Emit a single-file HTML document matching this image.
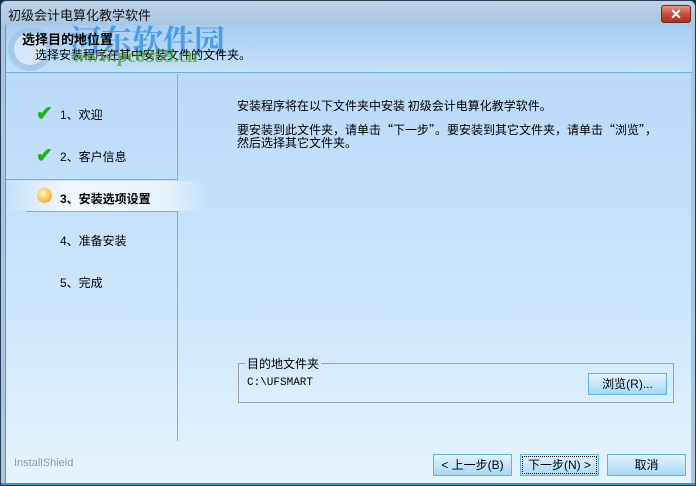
<!DOCTYPE html>
<html><head><meta charset="utf-8"><style>
*{margin:0;padding:0;box-sizing:border-box}
body{width:696px;height:486px;overflow:hidden;font-family:"Liberation Sans","Noto Sans CJK SC","WenQuanYi Zen Hei",sans-serif;font-size:12px;color:#000;background:#1b2a3a}
.win{position:absolute;left:0;top:0;width:696px;height:486px;border:1px solid #2b3c50;border-radius:6px 6px 0 0;background:linear-gradient(#bdd3e8,#a9c6e2 25px);overflow:hidden}
.title{position:absolute;left:7px;top:4px;font-size:13px;color:#111}
.close{position:absolute;left:660px;top:4px;width:30px;height:18px;border:1px solid #6b2a22;border-radius:3px;background:linear-gradient(#e2968a,#c5503e 50%,#b0301f);color:#fff;font-weight:bold;text-align:center;line-height:16px;font-size:14px}
.client{position:absolute;left:4px;top:24px;width:686px;height:459px;background:linear-gradient(#b6d7f8,#cde6fb 60%,#e6f4fd);border-left:1px solid #6a90b8}
.hdr{position:absolute;left:0;top:0;width:686px;height:48px;background:linear-gradient(#a9cdf2,#c4e0fa);border-bottom:1px solid #6fb1e8}
.h1{position:absolute;left:16px;top:4px;font-size:13px;font-weight:bold}
.h2{position:absolute;left:29px;top:21px;font-size:12px}
.wm{position:absolute;left:64px;top:-9px;font-size:31px;font-weight:bold;color:rgba(40,140,230,.75);font-family:"Noto Serif CJK SC",serif}
.wm2{position:absolute;left:66px;top:21px;font-size:19px;font-weight:bold;color:rgba(70,160,40,.7);font-family:"Liberation Serif",serif}
.logo{position:absolute;left:2px;top:2px;width:44px;height:44px;border-radius:50%;background:rgba(230,240,250,.6);border:6px solid rgba(120,170,220,.5)}
.vl{position:absolute;width:1px;background:#6fb1e8}
.hl{position:absolute;height:1px;background:#6fb1e8}
.step{position:absolute;left:54px;font-size:12px}
.chk{position:absolute;left:30px;color:#1db31d;font-size:20px;font-weight:bold}
.band{position:absolute;left:0;top:156px;width:200px;height:30px;background:linear-gradient(90deg,rgba(255,255,255,0),rgba(245,250,255,.95) 30%,rgba(255,255,255,.6) 80%,rgba(255,255,255,0))}
.ball{position:absolute;left:31px;top:163px;width:15px;height:15px;border-radius:50%;background:radial-gradient(circle at 40% 35%,#fff6c0,#f7c045 60%,#d88a10)}
.txt{position:absolute;left:231px;font-size:12px;line-height:13px;font-family:"Noto Sans CJK SC",sans-serif}
.grp{position:absolute;left:232px;top:338px;width:436px;height:40px;border:1px solid #a0a0a0}
.gl{position:absolute;left:6px;top:-9px;background:#d3e9fb;padding:0 2px;font-size:12px}
.path{position:absolute;left:8px;top:13px;font-family:"Liberation Mono",monospace;font-size:11px}
.btn{position:absolute;height:22px;border:1px solid #5fb3e6;background:linear-gradient(#e3f3fd,#c6e6fa 50%,#a8d6f4);text-align:center;line-height:20px;font-size:12px}
.is{position:absolute;left:8px;top:432px;color:#909aa4;font-size:11px}
</style></head><body>
<div class="win">
<div class="title">初级会计电算化教学软件</div>
<div class="close">✕</div>
<div class="client">
 <div class="hdr">
  <div class="logo"></div>
  <div class="wm">河东软件园</div>
  <div class="h1">选择目的地位置</div>
  <div class="h2">选择安装程序在其中安装文件的文件夹。</div>
  <div class="wm2">www.pc0359.cn</div>
 </div>
 <div class="vl" style="left:171px;top:49px;height:106px"></div>
 <div class="hl" style="left:0;top:154px;width:172px"></div>
 <div class="band"></div>
 <div class="hl" style="left:20px;top:186px;width:152px"></div>
 <div class="vl" style="left:171px;top:186px;height:230px"></div>
 <div class="chk" style="top:76px">✔</div><div class="step" style="top:81px">1、欢迎</div>
 <div class="chk" style="top:118px">✔</div><div class="step" style="top:123px">2、客户信息</div>
 <div class="ball"></div><div class="step" style="top:165px;font-weight:bold">3、安装选项设置</div>
 <div class="step" style="top:207px">4、准备安装</div>
 <div class="step" style="top:249px">5、完成</div>
 <div class="txt" style="top:74px">安装程序将在以下文件夹中安装 初级会计电算化教学软件。</div>
 <div class="txt" style="top:98px">要安装到此文件夹，请单击“下一步”。要安装到其它文件夹，请单击“浏览”，<br>然后选择其它文件夹。</div>
 <div class="grp"><div class="gl">目的地文件夹</div><div class="path">C:\UFSMART</div></div>
 <div class="btn" style="left:582px;top:348px;width:79px">浏览(R)...</div>
 <div class="is">InstallShield</div>
 <div class="btn" style="left:427px;top:429px;width:79px">&lt; 上一步(B)</div>
 <div class="btn" style="left:514px;top:429px;width:79px;outline:1px dotted #000;outline-offset:-3px">下一步(N) &gt;</div>
 <div class="btn" style="left:601px;top:429px;width:79px">取消</div>
</div>
<div style="position:absolute;left:0;top:482px;width:696px;height:4px;background:#2e9ad0"></div>
</div>
</body></html>
